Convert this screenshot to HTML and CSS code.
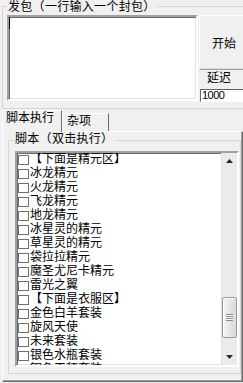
FILE: index.html
```html
<!DOCTYPE html>
<html>
<head lang="zh-CN">
    <meta charset="UTF-8">
    <title>发包</title>
    <link rel="stylesheet" href="styles.css">
</head>
<body>
<div class="win">
    <fieldset class="group send">
        <legend>发包（一行输入一个封包）</legend>
        <div class="send-row">
            <div class="packets"><span class="caret"></span></div>
            <div class="side">
                <div class="btn start">开始</div>
                <div class="delay-label">延迟</div>
                <div class="delay">1000</div>
            </div>
        </div>
    </fieldset>

    <div class="tab-strip">
        <span class="tab active">脚本执行</span>
        <span class="tab">杂项</span>
    </div>
    <div class="tab-panel">
        <fieldset class="group script">
            <legend>脚本（双击执行）</legend>
            <div class="list">
                <ul class="items">
                    <li><i class="chk"></i>【下面是精元区】</li>
                    <li><i class="chk"></i>冰龙精元</li>
                    <li><i class="chk"></i>火龙精元</li>
                    <li><i class="chk"></i>飞龙精元</li>
                    <li><i class="chk"></i>地龙精元</li>
                    <li><i class="chk"></i>冰星灵的精元</li>
                    <li><i class="chk"></i>草星灵的精元</li>
                    <li><i class="chk"></i>袋拉拉精元</li>
                    <li><i class="chk"></i>魔圣尤尼卡精元</li>
                    <li><i class="chk"></i>雷光之翼</li>
                    <li><i class="chk"></i>【下面是衣服区】</li>
                    <li><i class="chk"></i>金色白羊套装</li>
                    <li><i class="chk"></i>旋风天使</li>
                    <li><i class="chk"></i>未来套装</li>
                    <li><i class="chk"></i>银色水瓶套装</li>
                    <li><i class="chk"></i>铜色天秤套装</li>
                </ul>
                <div class="scrollbar">
                    <div class="arrow">
                        <svg width="7" height="4" viewBox="0 0 7 4"><path d="M3.5 0 L7 4 L0 4 Z" fill="#1c2b3c"/></svg>
                    </div>
                    <div class="thumb"><span class="grip"></span></div>
                    <div class="arrow down">
                        <svg width="7" height="4" viewBox="0 0 7 4"><path d="M0 0 L7 0 L3.5 4 Z" fill="#2a2a2a"/></svg>
                    </div>
                </div>
            </div>
        </fieldset>
    </div>
</div>
</body>
</html>
```

FILE: styles.css
```css
* {
    padding: 0;
    margin: 0;
    box-sizing: border-box;
    list-style: none;
}

html, body {
    width: 243px;
    height: 383px;
    overflow: hidden;
}

body {
    background: #f0f0f0;
    font-family: "Noto Sans CJK SC", "Liberation Sans", sans-serif;
    font-size: 12px;
    color: #000;
}

.win {
    width: 243px;
    height: 383px;
    overflow: hidden;
}

/* group boxes */
.group {
    border: 1px solid #d5d5d5;
    min-width: 0;
}

.send {
    margin-left: 2px;
    width: 260px;
    padding: 2px 0 6px 4px;
}

.send legend {
    padding: 0 1px 1px 1px;
    line-height: 12px;
    letter-spacing: 0.3px;
}

.send-row {
    display: flex;
}

.packets {
    width: 191px;
    height: 86px;
    background: #fff;
    border: 2px solid;
    border-color: #a0a0a0 #fff #fff #a0a0a0;
    box-shadow: inset 1px 1px 0 #696969, inset -1px -1px 0 #e3e3e3;
}

.caret {
    display: block;
    width: 1px;
    height: 12px;
    background: #000;
}

.side {
    margin-left: 1px;
    width: 50px;
}

.btn {
    height: 55px;
    border: 1px solid;
    border-color: #fff #696969 #a0a0a0 #fff;
    box-shadow: inset -1px -1px 0 #d8d8d8;
    display: flex;
    align-items: center;
    padding-left: 12px;
}

.delay-label {
    height: 19px;
    padding: 1px 0 0 8px;
    line-height: 12px;
}

.delay {
    margin-left: 1px;
    height: 13px;
    background: #fff;
    border: 1px solid;
    border-color: #646464 #fff #fff #646464;
    font-family: "Liberation Sans", sans-serif;
    font-size: 11px;
    letter-spacing: -0.5px;
    line-height: 11px;
    padding-left: 1px;
}

/* tabs */
.tab-strip {
    display: flex;
    align-items: flex-end;
    height: 22px;
    padding-left: 2px;
}

.tab {
    border: 1px solid;
    border-bottom: 0;
    border-color: #fff #696969 transparent #fff;
    line-height: 12px;
    background: #f0f0f0;
}

.tab.active {
    position: relative;
    z-index: 1;
    width: 60px;
    height: 22px;
    margin-bottom: -1px;
    padding-left: 3px;
}

.tab:not(.active) {
    width: 47px;
    height: 18px;
    padding-left: 4px;
}

.tab-panel {
    margin-left: 2px;
    width: 241px;
    height: 251px;
    border: 1px solid;
    border-color: #fff #696969 #696969 #fff;
    box-shadow: inset -1px -1px 0 #a0a0a0;
    padding: 0 1px 0 5px;
}

.script {
    width: 233px;
    padding: 2px 1px 6px 6px;
}

.script legend {
    padding: 0 2px 5px 0;
    line-height: 12px;
    letter-spacing: 0.3px;
}

/* check list */
.list {
    display: flex;
    width: 224px;
    height: 216px;
    background: #fff;
    border: 2px solid;
    border-color: #a0a0a0 #fff #fff #a0a0a0;
    box-shadow: inset 1px 1px 0 #696969, inset -1px -1px 0 #e3e3e3;
    overflow: hidden;
}

.items {
    flex: 1;
    margin-top: -2px;
    padding-left: 1px;
    overflow: hidden;
}

.items li {
    display: flex;
    align-items: flex-start;
    height: 14px;
    line-height: 14px;
    white-space: nowrap;
}

.chk {
    flex: none;
    width: 11px;
    height: 10px;
    margin: 4px 1px 0 0;
    border: 1px solid #707070;
    background: #fff;
}

.scrollbar {
    width: 16px;
    display: flex;
    flex-direction: column;
    background: #ebebeb;
    border-left: 1px solid #dedede;
}

.arrow {
    height: 16px;
    display: flex;
    align-items: center;
    justify-content: center;
}

.arrow.down {
    margin-top: auto;
}

.thumb {
    margin-top: 128px;
    height: 41px;
    border: 1px solid #989898;
    border-radius: 2px;
    background: linear-gradient(to right, #f6f6f6, #e6e6e6 50%, #d9d9d9);
    box-shadow: inset 1px 1px 0 #fff;
    display: flex;
    align-items: center;
    justify-content: center;
}

.grip {
    width: 7px;
    height: 7px;
    background: repeating-linear-gradient(to bottom, #8c8c8c 0, #8c8c8c 1px, #fafafa 1px, #fafafa 2px);
}
```
